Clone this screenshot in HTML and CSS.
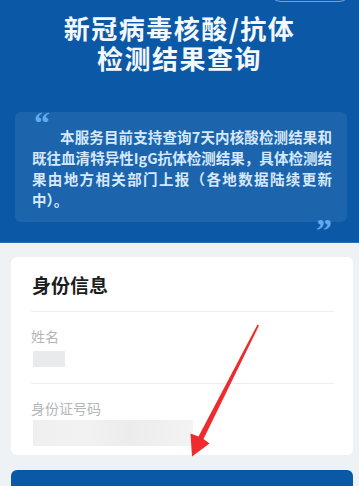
FILE: index.html
```html
<!DOCTYPE html>
<html lang="zh-CN">
<head>
    <meta charset="UTF-8">
    <meta name="viewport" content="width=device-width, initial-scale=1.0">
    <title>新冠病毒核酸/抗体检测结果查询</title>
    <link rel="stylesheet" href="styles.css">
</head>
<body>
    <!-- Header -->
    <div class="header">
        <span class="top-pill"></span>
        <h1>新冠病毒核酸/抗体<br>检测结果查询</h1>
        <div class="notice">
            <span class="quote-open">“</span>
            <p>本服务目前支持查询7天内核酸检测结果和既往血清特异性IgG抗体检测结果，具体检测结果由地方相关部门上报（各地数据陆续更新中）。</p>
            <span class="quote-close">”</span>
        </div>
    </div>

    <!-- Identity form -->
    <div class="card">
        <h2>身份信息</h2>
        <div class="field">
            <label>姓名</label>
            <div class="masked masked-name"></div>
        </div>
        <div class="field">
            <label>身份证号码</label>
            <div class="masked masked-id"></div>
        </div>
    </div>

    <button class="submit">立即查询</button>

    <!-- annotation arrow -->
    <svg class="arrow" width="359" height="486" viewBox="0 0 359 486">
        <polygon points="257.5,324.5 259,325.5 203.5,439 209.5,443.5 192,456.5 190.5,433.5 198.5,436.5" fill="#ef2b2d"/>
    </svg>
</body>
</html>
```

FILE: styles.css
```css
* {
    margin: 0;
    padding: 0;
    box-sizing: border-box;
}

body {
    background: #eef2f4;
    font-family: "Noto Sans CJK SC", "Noto Sans", sans-serif;
    position: relative;
    overflow: hidden;
}

/* Header */
.header {
    position: relative;
    background: #0b59a6;
    padding: 13px 0 20px;
    border-bottom: 1px solid #2a6fb3;
}

.top-pill {
    position: absolute;
    top: -24px;
    right: 7px;
    width: 84px;
    height: 26px;
    border: 1px solid rgba(255, 255, 255, 0.45);
    border-radius: 13px;
}

.header h1 {
    color: #f3f8fd;
    font-size: 26px;
    line-height: 30px;
    font-weight: 700;
    text-align: center;
    letter-spacing: 1.5px;
}

.notice {
    position: relative;
    margin: 39px 12px 0 15px;
    padding: 0 15px 12px 17px;
    background: rgba(255, 255, 255, 0.07);
    border-radius: 6px;
    color: #d6e8fb;
}

.quote-open,
.quote-close {
    display: block;
    font-family: "Liberation Serif", serif;
    font-weight: 700;
    font-size: 32px;
    line-height: 10px;
    color: #62aaf0;
}

.quote-open {
    padding-top: 6px;
    margin-left: 2px;
    height: 14px;
}

.quote-close {
    position: absolute;
    right: 15px;
    bottom: -17px;
    height: 14px;
}

.notice p {
    font-size: 14.5px;
    line-height: 21px;
    font-weight: 700;
    text-indent: 28px;
    text-align: justify;
}

/* Card */
.card {
    background: #fff;
    margin: 14px 6px 0 11px;
    padding: 15px 19px 9px 20px;
    border-radius: 6px;
}

.card h2 {
    font-size: 19px;
    line-height: 26px;
    font-weight: 700;
    color: #1b1d21;
    padding: 0 0 13px 1px;
    border-bottom: 1px solid #eeeeee;
}

.field {
    padding-top: 14px;
}

.field + .field {
    border-top: 1px solid #eeeeee;
}

.field label {
    display: block;
    font-size: 14px;
    line-height: 20px;
    color: #b3b6ba;
}

.masked {
    margin-left: 2px;
    background: #e9eaec;
}

.masked-name {
    width: 32px;
    height: 16px;
    margin-top: 5px;
    margin-bottom: 16px;
}

.masked-id {
    width: 160px;
    height: 26px;
    margin-top: 2px;
    background: linear-gradient(90deg, #efeff0, #f2f2f3 30%, #ececed 60%, #f3f3f4);
}

/* Submit */
.submit {
    display: block;
    width: calc(100% - 17px);
    margin: 15px 6px 0 11px;
    height: 48px;
    background: #0b59a6;
    color: #fff;
    border: none;
    border-radius: 6px;
    font-family: inherit;
    font-size: 18px;
    font-weight: 700;
    letter-spacing: 2px;
}

.arrow {
    position: absolute;
    top: 0;
    left: 0;
    pointer-events: none;
}
```
